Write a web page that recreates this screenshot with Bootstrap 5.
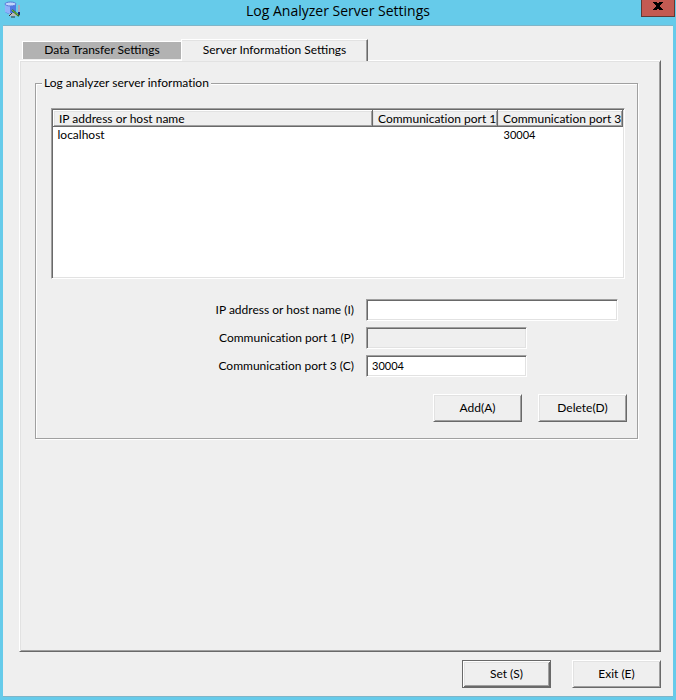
<!DOCTYPE html>
<html lang="en">
<head>
<meta charset="utf-8">
<meta name="viewport" content="width=device-width, initial-scale=1">
<title>Log Analyzer Server Settings</title>
<link href="https://cdn.jsdelivr.net/npm/bootstrap@5.3.0/dist/css/bootstrap.min.css" rel="stylesheet">
<style>
:root { --face: #efefef; --light: #e2e2e2; --shade: #a0a0a0; --dark: #696969; }
body { font-family: Lato, "Liberation Sans", sans-serif; font-size: 12px; line-height: 16px; font-variant-ligatures: none; color: #000; background: #66cbea; }
.title-bar { height: 25px; }
.title-bar h1 { font: 14px/22px "Open Sans", sans-serif; padding-left: 13px; }
.app-icon { flex: none; width: 18px; height: 18px; margin: 1px 0 0 4px; }
.close-btn { width: 34px; height: 17px; border: 1px solid #5f3a36; border-top: 0; background: #c35a52; margin-right: 1px; line-height: 0; }
.close-btn svg { margin-bottom: 4px; }
.client { margin: 0 3px 3px; border: 1px solid #80b5c8; border-width: 1px 0; background: var(--face); padding: 13px 12px 8px 16px; }
.tabs { padding-left: 3px; }
.tab { border: 0; color: #000; line-height: 16px; padding: 0; }
.tab-idle { width: 159px; height: 18px; line-height: 14px; padding-bottom: 2px; background: #b2b2b2; border: 1px solid #fff; border-right: 0; border-bottom: 0; margin-top: 2px; }
.tab-current { width: 187px; height: 22px; padding-bottom: 2px; margin-bottom: -1px; position: relative; background: var(--face); border-left: 1px solid #fff; border-top: 1px solid #fff; border-right: 1px solid var(--dark); box-shadow: inset -1px 0 var(--shade), inset 0 1px var(--light); }
.panel { border: 1px solid; border-color: #fff var(--dark) var(--dark) #fff; box-shadow: inset 1px 1px var(--light), inset -1px -1px var(--shade); padding: 14px 22px 0 15px; }
.group { border: 1px solid var(--shade); box-shadow: 1px 1px #fff, inset 1px 1px #fff; padding: 17px 12px 16px 15px; }
.group legend { float: none; width: auto; font-size: 12px; line-height: 16px; margin: 0 0 0 -9px; padding: 0 2px; background: var(--face); }
.sunken { border: 1px solid; border-color: var(--shade) #fff #fff var(--shade); box-shadow: inset 1px 1px var(--dark), inset -1px -1px var(--light); }
.list-view { height: 171px; background: #fff; padding: 1px; }
.list-view table { table-layout: fixed; }
.list-view th { font-weight: 400; height: 16px; line-height: 13px; padding: 0 0 0 5px; background: var(--face); border: 1px solid; border-color: #fff var(--dark) var(--dark) #fff; box-shadow: inset -1px -1px var(--shade), inset 1px 1px var(--light); white-space: nowrap; }
.list-view td { padding: 0 0 0 4px; line-height: 16px; }
.list-view td + td { padding-left: 6px; }
.col-port { width: 125px; }
.fields { padding: 20px 7px 0 0; gap: 6px; }
.fields label { padding-right: 12px; }
.field-box { width: 252px; }
.fields input { height: 22px; padding: 0 5px 2px; border-radius: 0; color: #000; outline: 0; background: #fff; }
.fields input:disabled { background: var(--face); }
.short-input { width: 161px; }
.push { width: 89px; height: 28px; padding: 0; color: #000; background: var(--face); border: 1px solid; border-color: #fff var(--dark) var(--dark) #fff; box-shadow: inset 1px 1px var(--light), inset -1px -1px var(--shade); line-height: 16px; }
.push-default { border-color: var(--dark); box-shadow: inset 1px 1px #fff, inset -1px -1px var(--dark), inset 2px 2px var(--light), inset -2px -2px var(--shade); }
.actions { gap: 16px; padding-top: 17px; margin-right: -2px; }
.footer-actions { gap: 21px; padding-top: 8px; }
.num { font-size: 11px; }
</style>
<script src="https://cdn.jsdelivr.net/npm/bootstrap@5.3.0/dist/js/bootstrap.bundle.min.js"></script>
</head>
<body class="d-flex flex-column min-vh-100">
<header class="title-bar d-flex align-items-start">
  <svg class="app-icon" viewBox="0 0 18 18" aria-hidden="true">
    <path d="M1 3v8q5 4 11 0V3z" fill="#4f78e4"/><path d="M1 3v8l5 2V4z" fill="#8fb2fa"/>
    <ellipse cx="6.500" cy="3" rx="5.500" ry="2" fill="#c1d5fb" stroke="#5577d8"/>
    <path d="M6 12h10v3H5z" fill="#bbb"/><path d="M5 15l3-3M7 16h4" stroke="#333"/>
    <path d="M15 4v7" stroke="#aab" stroke-width="2"/><path d="M14 11h2v3h-2z" fill="#142c86"/>
    <path d="M8 9l7 6" stroke="#246b24" stroke-width="2"/><path d="M8 9l6 5" stroke="#86b83b"/>
  </svg>
  <h1 class="flex-grow-1 text-center my-0">Log Analyzer Server Settings</h1>
  <button type="button" class="close-btn p-0" aria-label="Close"><svg width="10" height="8" viewBox="0 0 10 8" shape-rendering="crispEdges"><path d="M0 0h4v1h2V0h4v1H9v1H8v1H7v2h1v1h1v1h1v1H6V7H4v1H0V7h1V6h1V5h1V3H2V2H1V1H0z"/></svg></button>
</header>
<main class="client flex-grow-1 d-flex flex-column">
  <div class="tabs d-flex align-items-start" role="tablist">
    <button type="button" class="tab tab-idle" role="tab" aria-selected="false">Data Transfer Settings</button>
    <button type="button" class="tab tab-current" role="tab" aria-selected="true">Server Information Settings</button>
  </div>
  <section class="panel flex-grow-1" role="tabpanel">
    <fieldset class="group">
      <legend>Log analyzer server information</legend>
      <div class="list-view sunken">
        <table class="w-100">
          <colgroup><col><col class="col-port"><col class="col-port"></colgroup>
          <thead><tr><th>IP address or host name</th><th>Communication port 1</th><th>Communication port 3</th></tr></thead>
          <tbody><tr><td>localhost</td><td></td><td class="num">30004</td></tr></tbody>
        </table>
      </div>
      <div class="fields d-flex flex-column">
        <div class="d-flex align-items-center">
          <label class="flex-grow-1 text-end" for="host">IP address or host name (I)</label>
          <div class="field-box d-flex"><input id="host" type="text" class="sunken w-100"></div>
        </div>
        <div class="d-flex align-items-center">
          <label class="flex-grow-1 text-end" for="port1">Communication port 1 (P)</label>
          <div class="field-box d-flex"><input id="port1" type="text" class="sunken short-input" disabled></div>
        </div>
        <div class="d-flex align-items-center">
          <label class="flex-grow-1 text-end" for="port3">Communication port 3 (C)</label>
          <div class="field-box d-flex"><input id="port3" type="text" class="sunken short-input num" value="30004"></div>
        </div>
      </div>
      <div class="actions d-flex justify-content-end">
        <button type="button" class="push">Add(A)</button>
        <button type="button" class="push">Delete(D)</button>
      </div>
    </fieldset>
  </section>
  <div class="footer-actions d-flex justify-content-end">
    <button type="submit" class="push push-default">Set (S)</button>
    <button type="button" class="push">Exit (E)</button>
  </div>
</main>
</body>
</html>
